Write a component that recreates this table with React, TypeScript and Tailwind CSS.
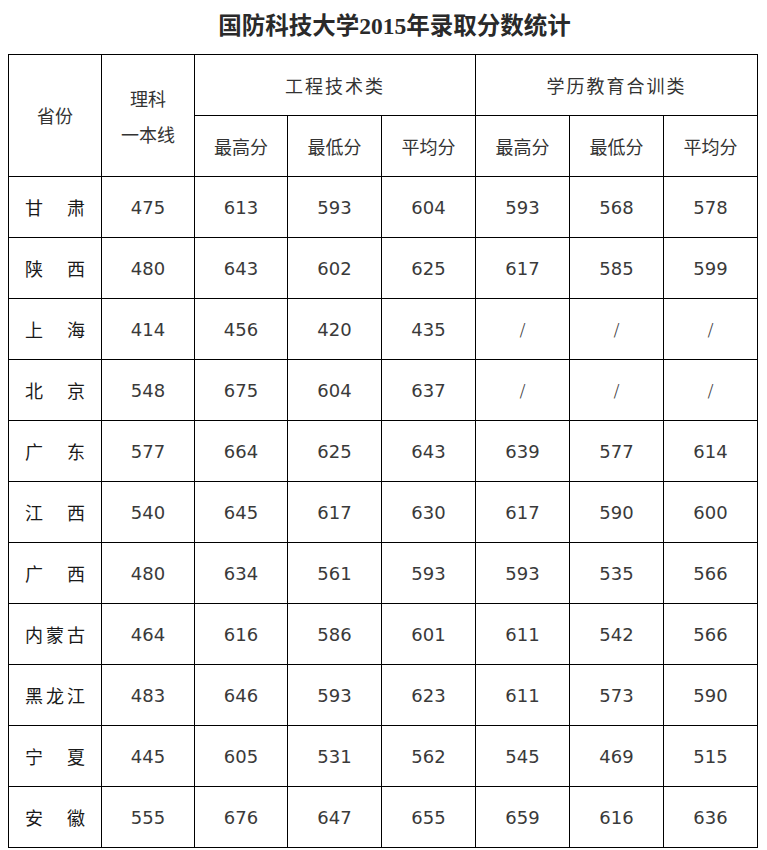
import React from "react";

const rows: [string, string[]][] = [
  ["甘肃", ["475", "613", "593", "604", "593", "568", "578"]],
  ["陕西", ["480", "643", "602", "625", "617", "585", "599"]],
  ["上海", ["414", "456", "420", "435", "/", "/", "/"]],
  ["北京", ["548", "675", "604", "637", "/", "/", "/"]],
  ["广东", ["577", "664", "625", "643", "639", "577", "614"]],
  ["江西", ["540", "645", "617", "630", "617", "590", "600"]],
  ["广西", ["480", "634", "561", "593", "593", "535", "566"]],
  ["内蒙古", ["464", "616", "586", "601", "611", "542", "566"]],
  ["黑龙江", ["483", "646", "593", "623", "611", "573", "590"]],
  ["宁夏", ["445", "605", "531", "562", "545", "469", "515"]],
  ["安徽", ["555", "676", "647", "655", "659", "616", "636"]],
];

const cjk = { fontFamily: '"Noto Sans CJK SC", sans-serif' };
const num = { fontFamily: '"DejaVu Sans", "Noto Sans CJK SC", sans-serif' };

export default function App() {
  return (
    <div className="w-[767px] h-[850px] bg-white overflow-hidden">
      <div className="h-[54px] flex items-center justify-center pl-[22px]">
        <h1
          className="text-[23.5px] font-bold text-[#2a2a2a] leading-none"
          style={{ fontFamily: '"Liberation Serif", "Noto Sans CJK SC", serif' }}
        >
          国防科技大学2015年录取分数统计
        </h1>
      </div>
      <table className="ml-[8px] border-collapse table-fixed w-[749px] text-[#333]">
        <colgroup>
          <col className="w-[93px]" />
          <col className="w-[93px]" />
          <col className="w-[93px]" />
          <col className="w-[94px]" />
          <col className="w-[94px]" />
          <col className="w-[94px]" />
          <col className="w-[94px]" />
          <col className="w-[94px]" />
        </colgroup>
        <thead>
          <tr className="h-[61px]">
            <th rowSpan={2} className="border-[1.5px] border-black font-normal text-[18px]" style={cjk}>
              省份
            </th>
            <th rowSpan={2} className="border-[1.5px] border-black font-normal text-[18px] leading-[36px]" style={cjk}>
              <div>理科</div>
              <div>一本线</div>
            </th>
            <th colSpan={3} className="border-[1.5px] border-black font-normal text-[18px] tracking-[2px]" style={cjk}>
              工程技术类
            </th>
            <th colSpan={3} className="border-[1.5px] border-black font-normal text-[18px] tracking-[2px]" style={cjk}>
              学历教育合训类
            </th>
          </tr>
          <tr className="h-[61px]">
            {["最高分", "最低分", "平均分", "最高分", "最低分", "平均分"].map((t, i) => (
              <th key={i} className="border-[1.5px] border-black font-normal text-[18px]" style={cjk}>
                {t}
              </th>
            ))}
          </tr>
        </thead>
        <tbody>
          {rows.map(([name, vals]) => (
            <tr key={name} className="h-[61px]">
              <td className="border-[1.5px] border-black">
                <div
                  className="mx-auto w-[60px] flex justify-between text-[18px] font-normal text-[#1a1a1a]"
                  style={cjk}
                >
                  {name.split("").map((c, i) => (
                    <span key={i}>{c}</span>
                  ))}
                </div>
              </td>
              {vals.map((v, i) => (
                <td
                  key={i}
                  className={`border-[1.5px] border-black text-center text-[18px] text-[#3a3a3a] ${v === "/" ? "font-light" : ""}`}
                  style={num}
                >
                  {v}
                </td>
              ))}
            </tr>
          ))}
        </tbody>
      </table>
    </div>
  );
}
